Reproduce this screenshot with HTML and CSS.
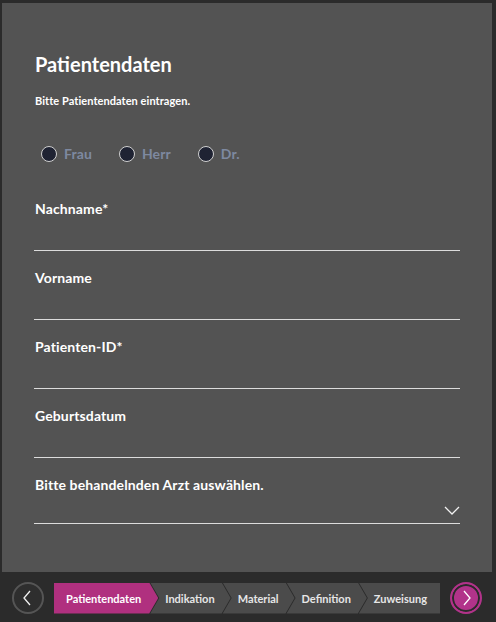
FILE: index.html
```html
<!DOCTYPE html>
<html lang="de">
<head>
<meta charset="utf-8">
<title>Patientendaten</title>
<link rel="stylesheet" href="styles.css">
</head>
<body>
<main class="panel">
  <h1 class="title">Patientendaten</h1>
  <p class="subtitle">Bitte Patientendaten eintragen.</p>
  <div class="radios">
    <label class="radio"><span class="dot"></span><span class="radio-text">Frau</span></label>
    <label class="radio"><span class="dot"></span><span class="radio-text">Herr</span></label>
    <label class="radio"><span class="dot"></span><span class="radio-text">Dr.</span></label>
  </div>
  <div class="field">
    <div class="label">Nachname*</div>
    <div class="input"></div>
  </div>
  <div class="field">
    <div class="label">Vorname</div>
    <div class="input"></div>
  </div>
  <div class="field">
    <div class="label">Patienten-ID*</div>
    <div class="input"></div>
  </div>
  <div class="field">
    <div class="label">Geburtsdatum</div>
    <div class="input"></div>
  </div>
  <div class="field">
    <div class="label">Bitte behandelnden Arzt auswählen.</div>
    <div class="input select">
      <svg class="chev" width="16" height="9" viewBox="0 0 16 9"><polyline points="1,1 8,8 15,1" fill="none" stroke="#f2f2f2" stroke-width="1.3"/></svg>
    </div>
  </div>
</main>
<nav class="nav">
  <button class="circle prev" type="button">
    <svg width="10" height="16" viewBox="0 0 10 16"><polyline points="8,1 2,8 8,15" fill="none" stroke="#f0f0f0" stroke-width="1.3"/></svg>
  </button>
  <ol class="crumbs">
    <li class="crumb first active">Patientendaten</li>
    <li class="crumb">Indikation</li>
    <li class="crumb">Material</li>
    <li class="crumb">Definition</li>
    <li class="crumb last">Zuweisung</li>
  </ol>
  <button class="circle next" type="button">
    <svg width="10" height="16" viewBox="0 0 10 16"><polyline points="2,1 8,8 2,15" fill="none" stroke="#ffffff" stroke-width="1.3"/></svg>
  </button>
</nav>
</body>
</html>
```

FILE: styles.css
```css
* { box-sizing: border-box; }
html, body { margin: 0; padding: 0; }
body {
  width: 496px;
  height: 622px;
  background: #2b2b2b;
  font-family: Lato, "Liberation Sans", sans-serif;
  color: #ffffff;
  overflow: hidden;
}
.panel {
  margin: 3px 4px 0 2px;
  height: 569px;
  background: #535353;
  padding: 47px 32px 0 32px;
}
.title {
  margin: 0;
  font-size: 20px;
  line-height: 28px;
  font-weight: 700;
  padding-left: 1px;
}
.subtitle {
  margin: 15px 0 0 0;
  font-size: 11px;
  line-height: 16px;
  font-weight: 700;
  letter-spacing: 0.06px;
  padding-left: 1px;
}
.radios {
  display: flex;
  margin-top: 35px;
  padding-left: 7px;
  gap: 27px;
  height: 20px;
  align-items: center;
}
.radio {
  display: flex;
  align-items: center;
  gap: 7px;
}
.dot {
  width: 16px;
  height: 16px;
  border-radius: 50%;
  background: #1f2333;
  border: 1.5px solid #d0d0d0;
}
.radio-text {
  font-size: 14px;
  font-weight: 700;
  color: #7e89a0;
  line-height: 20px;
  letter-spacing: 0.1px;
}
.field {
  margin-top: 35px;
}
.field + .field {
  margin-top: 17px;
}
.label {
  font-size: 14px;
  line-height: 20px;
  font-weight: 700;
  letter-spacing: 0.12px;
  padding-left: 1px;
}
.input {
  height: 32px;
  border-bottom: 1px solid #dcdcdc;
}
.select {
  height: 29px;
  display: flex;
  align-items: flex-end;
  justify-content: flex-end;
  padding: 0 0 8px 0;
}
.chev { display: block; }
.nav {
  display: flex;
  align-items: center;
  gap: 10px;
  padding: 0 14px 0 12px;
  margin-top: 10px;
  height: 32px;
}
.circle {
  width: 32px;
  height: 32px;
  border-radius: 50%;
  padding: 0;
  display: flex;
  align-items: center;
  justify-content: center;
  flex: none;
}
.prev {
  background: #2e2e2e;
  border: 2px solid #555555;
}
.prev svg { margin-left: -2px; }
.next {
  background: #b2338a;
  border: 2px solid #b2338a;
  box-shadow: inset 0 0 0 2px #2b2b2b;
}
.next svg { margin-left: 2px; }
.crumbs {
  flex: 1;
  min-width: 0;
  display: flex;
  list-style: none;
  margin: 0;
  padding: 0;
  height: 31px;
}
.crumb {
  background: #4b4b4b;
  color: #e6e6e6;
  font-size: 11px;
  font-weight: 700;
  line-height: 31px;
  padding: 0 16px 0 16px;
  margin-left: -9px;
  clip-path: polygon(1px 0, calc(100% - 9px) 0, 100% 50%, calc(100% - 9px) 100%, 1px 100%, 10px 50%);
  white-space: nowrap;
}
.crumb.first {
  margin-left: 0;
  padding-left: 12px;
  padding-right: 17px;
  clip-path: polygon(0 0, calc(100% - 9px) 0, 100% 50%, calc(100% - 9px) 100%, 0 100%);
}
.crumb.active {
  background: #b0307f;
  color: #ffffff;
}
.crumb.last {
  flex: 1;
  padding-right: 11px;
  clip-path: polygon(1px 0, 100% 0, 100% 100%, 1px 100%, 10px 50%);
}
```
